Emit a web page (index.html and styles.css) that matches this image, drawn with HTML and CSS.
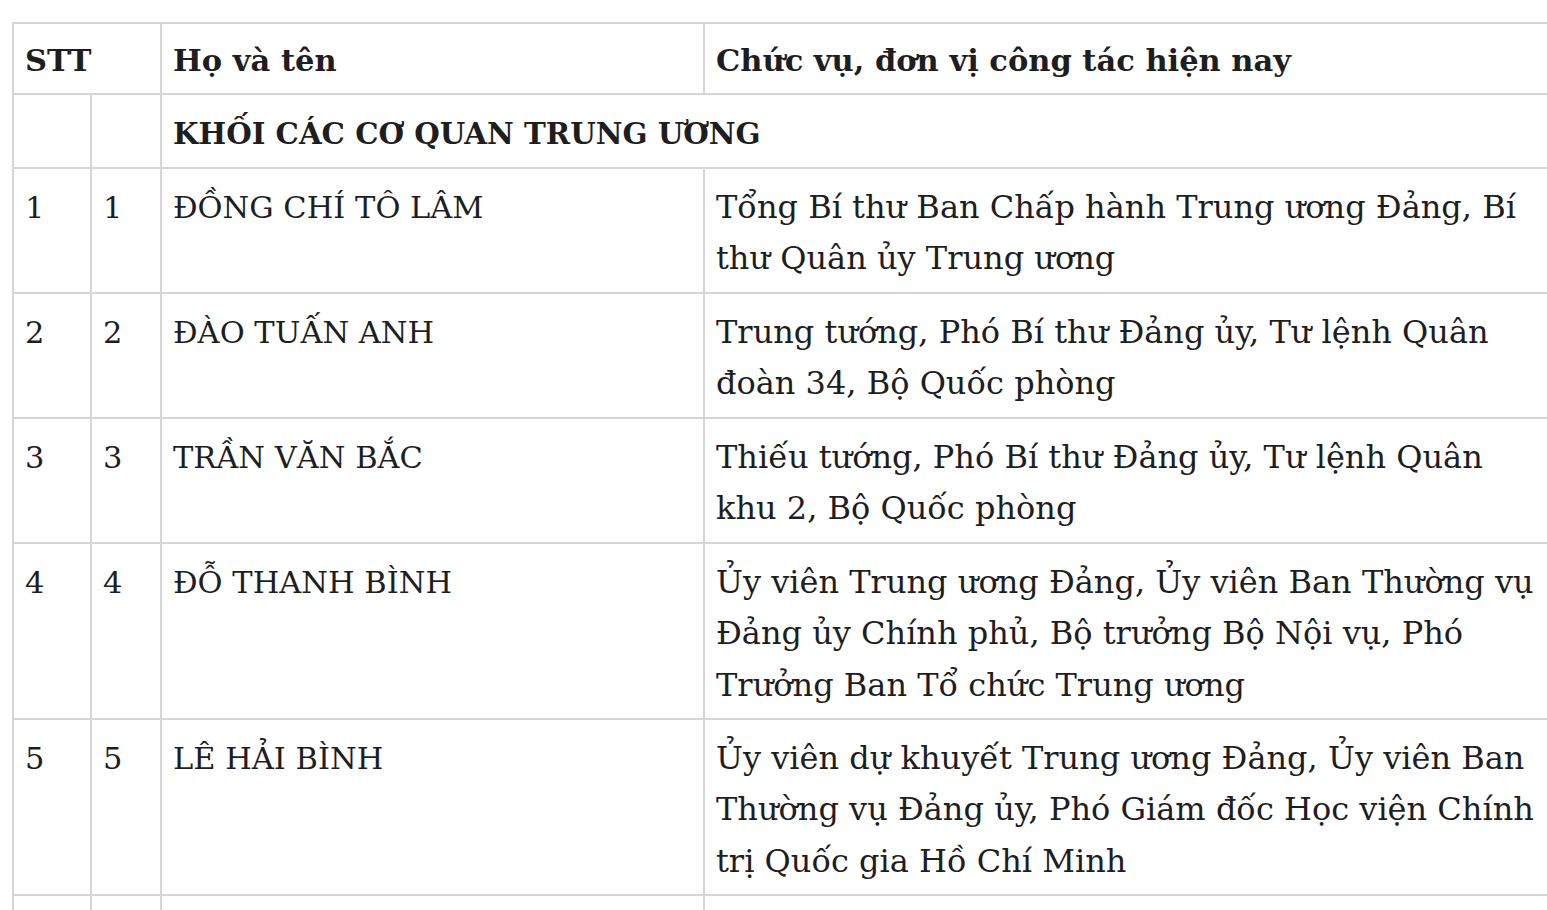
FILE: index.html
```html
<!DOCTYPE html>
<html lang="vi">
<head>
<meta charset="utf-8">
<title>Danh sách</title>
<link rel="stylesheet" href="styles.css">
</head>
<body>
<div class="wrap">
<table class="list">
  <colgroup>
    <col class="c1"><col class="c2"><col class="c3"><col class="c4">
  </colgroup>
  <thead>
    <tr><th colspan="2">STT</th><th>Họ và tên</th><th>Chức vụ, đơn vị công tác hiện nay</th></tr>
  </thead>
  <tbody>
    <tr class="section"><td></td><td></td><td colspan="2">KHỐI CÁC CƠ QUAN TRUNG ƯƠNG</td></tr>
    <tr><td>1</td><td>1</td><td>ĐỒNG CHÍ TÔ LÂM</td><td class="desc">Tổng Bí thư Ban Chấp hành Trung ương Đảng, Bí thư Quân ủy Trung ương</td></tr>
    <tr><td>2</td><td>2</td><td>ĐÀO TUẤN ANH</td><td class="desc">Trung tướng, Phó Bí thư Đảng ủy, Tư lệnh Quân đoàn 34, Bộ Quốc phòng</td></tr>
    <tr><td>3</td><td>3</td><td>TRẦN VĂN BẮC</td><td class="desc">Thiếu tướng, Phó Bí thư Đảng ủy, Tư lệnh Quân khu 2, Bộ Quốc phòng</td></tr>
    <tr><td>4</td><td>4</td><td>ĐỖ THANH BÌNH</td><td class="desc">Ủy viên Trung ương Đảng, Ủy viên Ban Thường vụ Đảng ủy Chính phủ, Bộ trưởng Bộ Nội vụ, Phó Trưởng Ban Tổ chức Trung ương</td></tr>
    <tr><td>5</td><td>5</td><td>LÊ HẢI BÌNH</td><td class="desc">Ủy viên dự khuyết Trung ương Đảng, Ủy viên Ban Thường vụ Đảng ủy, Phó Giám đốc Học viện Chính trị Quốc gia Hồ Chí Minh</td></tr>
    <tr><td>6</td><td>6</td><td>NGUYỄN VĂN CẢNH</td><td class="desc">Phó Bí thư Đảng ủy</td></tr>
  </tbody>
</table>
</div>
</body>
</html>
```
FILE: styles.css
```css
html, body {
  margin: 0;
  padding: 0;
  background: #ffffff;
  overflow: hidden;
}
.wrap {
  padding: 22px 0 0 12px;
  width: 1700px;
}
.list {
  border-collapse: collapse;
  table-layout: fixed;
  width: 1549px;
  font-family: "DejaVu Serif", "Liberation Serif", serif;
  font-size: 30.5px;
  line-height: 51.45px;
  color: #1e1e1e;
}
.c1 { width: 78px; }
.c2 { width: 70px; }
.c3 { width: 543px; }
.c4 { width: 858px; }
.list th, .list td {
  border: 2px solid #d6d6d6;
  padding: 13px 11px 7px;
  text-align: left;
  vertical-align: top;
}
.list th {
  font-weight: bold;
  padding: 11px 11px 7px;
}
.section td { font-weight: bold; font-size: 29.3px; }
.list td.desc {
  font-size: 32px;
}
```
